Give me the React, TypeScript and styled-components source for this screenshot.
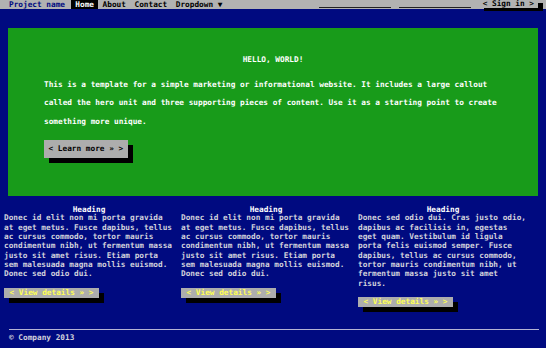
import styled, { createGlobalStyle } from "styled-components"

const GlobalStyle = createGlobalStyle`
  html, body {
    margin: 0;
    padding: 0;
    background: #000a80;
  }
  body {
    font-family: 'DejaVu Sans Mono', 'Liberation Mono', monospace;
    font-size: 7.75px;
    font-weight: bold;
    color: #d2d2dc;
  }
  * { box-sizing: border-box; }
`

const NavBar = styled.header`
  display: flex;
  align-items: flex-start;
  height: 9px;
  padding: 0 8px 0 9px;
  background: #b2b2b2;
  line-height: 9px;
`

const Brand = styled.span`
  color: #000a80;
  margin-right: 6px;
`

const NavList = styled.nav`
  display: flex;
`

const NavLink = styled.span<{ $active?: boolean }>`
  padding: 0 4.3px;
  height: 9px;
  color: ${p => (p.$active ? "#fff" : "#000")};
  background: ${p => (p.$active ? "#000" : "transparent")};
`

const SearchForm = styled.form`
  display: flex;
  gap: 8px;
  margin-left: auto;
`

const Field = styled.span`
  display: block;
  width: 72px;
  height: 8px;
  border-bottom: 1px solid #222;
`

const SignIn = styled.span`
  display: block;
  height: 8px;
  line-height: 8px;
  padding: 0 4px;
  color: #000;
  background: #b2b2b2;
  box-shadow: 5px 3px 0 #000;
`

const Hero = styled.section`
  margin: 19px 8px 0;
  height: 168px;
  padding: 23px 36px 0;
  background: #189b1a;
  color: #fff;
`

const HeroTitle = styled.h1`
  margin: 0;
  font-size: inherit;
  line-height: 18.7px;
  text-align: center;
`

const HeroText = styled.p`
  margin: 6px 0 0;
  line-height: 18.7px;
`

const Button = styled.span<{ $small?: boolean }>`
  display: inline-block;
  height: ${p => (p.$small ? "10px" : "18px")};
  line-height: ${p => (p.$small ? "10px" : "18px")};
  padding: 0 ${p => (p.$small ? "5.5px" : "4.5px")};
  margin-top: ${p => (p.$small ? "9.6px" : "8px")};
  background: #adadad;
  color: ${p => (p.$small ? "#ffff55" : "#000")};
  box-shadow: 5px 5px 0 #000;
`

const Columns = styled.main`
  display: grid;
  grid-template-columns: repeat(3, 170px);
  column-gap: 7px;
  align-items: start;
  padding: 0 4px;
  margin-top: 9.75px;
`

const Column = styled.article`
  display: flex;
  flex-direction: column;
  align-items: flex-start;
`

const Heading = styled.h2`
  align-self: stretch;
  margin: 0;
  font-size: inherit;
  line-height: 7.5px;
  text-align: center;
  color: #fff;
`

const ColumnText = styled.p`
  margin: 0;
  line-height: 9.33px;
`

const Footer = styled.footer`
  margin: 22px 7px 0 9px;
  padding-top: 3px;
  border-top: 1px solid #b4b4d4;
  line-height: 9.33px;
  color: #d2d2dc;
`

const textA =
  "Donec id elit non mi porta gravida at eget metus. Fusce dapibus, tellus ac cursus commodo, tortor mauris condimentum nibh, ut fermentum massa justo sit amet risus. Etiam porta sem malesuada magna mollis euismod. Donec sed odio dui."
const textB =
  "Donec sed odio dui. Cras justo odio, dapibus ac facilisis in, egestas eget quam. Vestibulum id ligula porta felis euismod semper. Fusce dapibus, tellus ac cursus commodo, tortor mauris condimentum nibh, ut fermentum massa justo sit amet risus."

export default function App() {
  const columns = [textA, textA, textB]
  return (
    <>
      <GlobalStyle />
      <NavBar>
        <Brand>Project name</Brand>
        <NavList>
          <NavLink $active>Home</NavLink>
          <NavLink>About</NavLink>
          <NavLink>Contact</NavLink>
          <NavLink>Dropdown ▼</NavLink>
        </NavList>
        <SearchForm>
          <Field />
          <Field />
          <SignIn>&lt; Sign in &gt;</SignIn>
        </SearchForm>
      </NavBar>

      <Hero>
        <HeroTitle>HELLO, WORLD!</HeroTitle>
        <HeroText>
          This is a template for a simple marketing or informational website. It includes a large callout
          called the hero unit and three supporting pieces of content. Use it as a starting point to create
          something more unique.
        </HeroText>
        <Button>&lt; Learn more » &gt;</Button>
      </Hero>

      <Columns>
        {columns.map((text, i) => (
          <Column key={`col-${i}`}>
            <Heading>Heading</Heading>
            <ColumnText>{text}</ColumnText>
            <Button $small>&lt; View details » &gt;</Button>
          </Column>
        ))}
      </Columns>

      <Footer>© Company 2013</Footer>
    </>
  )
}
